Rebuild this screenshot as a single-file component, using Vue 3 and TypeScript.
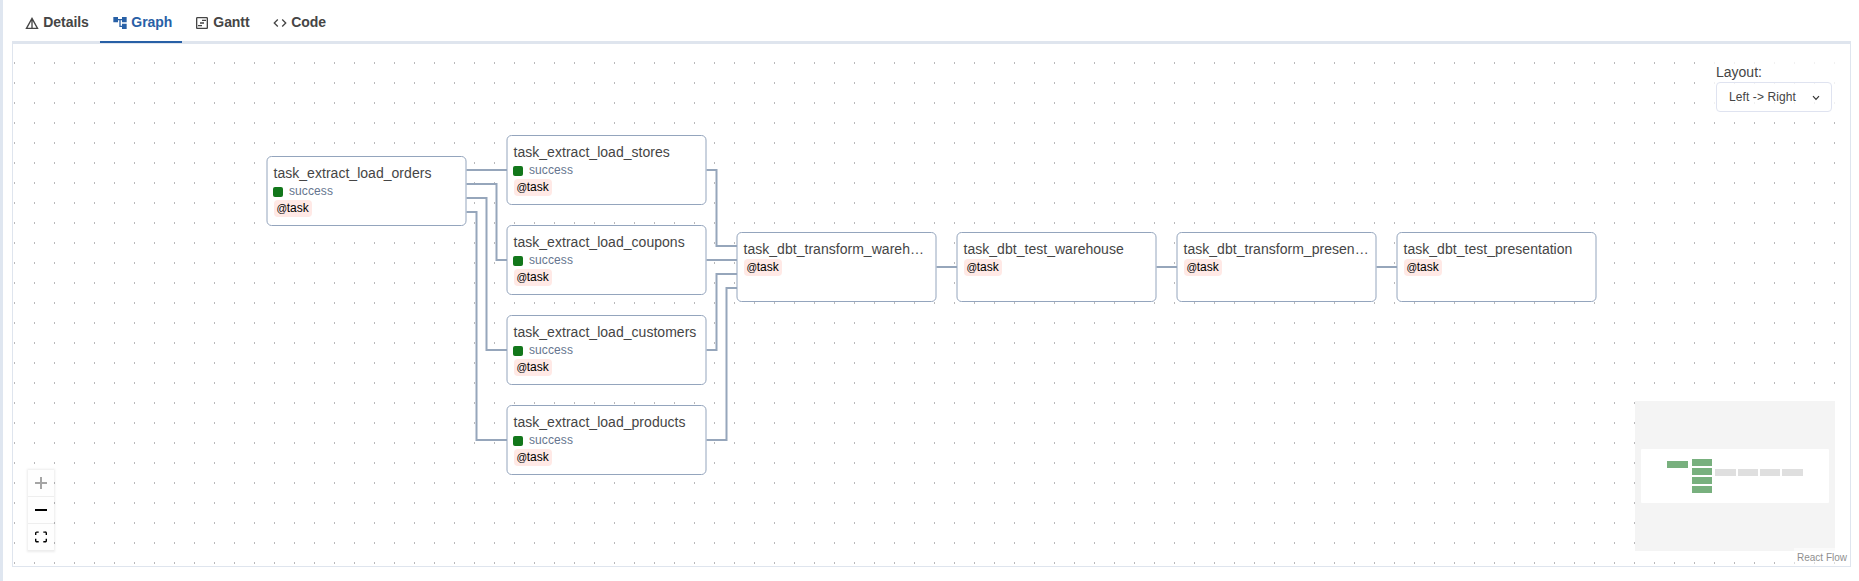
<script setup lang="ts">
interface TaskNode {
  id: string
  label: string
  x: number
  y: number
  success: boolean
}
interface MiniRect {
  x: number
  y: number
  w: number
  done: boolean
}

const tabs = [
  { name: 'Details', icon: 'M12 3L2 21h20L12 3zm1 5.92L18.6 19H13V8.92zm-2 0V19H5.4L11 8.92z' },
  { name: 'Graph', icon: 'M22 11V3h-7v3H9V3H2v8h7V8h2v10h4v3h7v-8h-7v3h-2V8h2v3z' },
  {
    name: 'Gantt',
    icon: 'M19 5v14H5V5h14m0-2H5c-1.1 0-2 .9-2 2v14c0 1.1.9 2 2 2h14c1.1 0 2-.9 2-2V5c0-1.1-.9-2-2-2zM12 7h6v2h-6zM9 11h6v2H9zM6 15h6v2H6z',
  },
  {
    name: 'Code',
    icon: 'M9.4 16.6L4.8 12l4.6-4.6L8 6l-6 6 6 6 1.4-1.4zm5.2 0l4.6-4.6-4.6-4.6L16 6l6 6-6 6-1.4-1.4z',
  },
]
const activeTab = 'Graph'

// Node positions are relative to the inner origin of the canvas.
const nodes: TaskNode[] = [
  { id: 'orders', label: 'task_extract_load_orders', x: 253, y: 112, success: true },
  { id: 'stores', label: 'task_extract_load_stores', x: 493, y: 91, success: true },
  { id: 'coupons', label: 'task_extract_load_coupons', x: 493, y: 181, success: true },
  { id: 'customers', label: 'task_extract_load_customers', x: 493, y: 271, success: true },
  { id: 'products', label: 'task_extract_load_products', x: 493, y: 361, success: true },
  { id: 'tw', label: 'task_dbt_transform_wareh…', x: 723, y: 188, success: false },
  { id: 'ew', label: 'task_dbt_test_warehouse', x: 943, y: 188, success: false },
  { id: 'tp', label: 'task_dbt_transform_presen…', x: 1163, y: 188, success: false },
  { id: 'ep', label: 'task_dbt_test_presentation', x: 1383, y: 188, success: false },
]

const edges = [
  'M453.5 126H494',
  'M453.5 140H483.5V216H494',
  'M453.5 154H473.5V306H494',
  'M453.5 168H463.5V396H494',
  'M693.5 126H703.5V202H724',
  'M693.5 216H724',
  'M693.5 306H703.5V230H724',
  'M693.5 396H713.5V244H724',
  'M923.5 223H944',
  'M1143.5 223H1164',
  'M1363.5 223H1384',
]

const mini: MiniRect[] = [
  { x: 32, y: 60, w: 21, done: true },
  { x: 57, y: 58, w: 20, done: true },
  { x: 57, y: 67, w: 20, done: true },
  { x: 57, y: 76, w: 20, done: true },
  { x: 57, y: 85, w: 20, done: true },
  { x: 80, y: 68, w: 21, done: false },
  { x: 103, y: 68, w: 20, done: false },
  { x: 125, y: 68, w: 20, done: false },
  { x: 147, y: 68, w: 21, done: false },
]
</script>

<template>
  <div class="page">
    <nav class="tabs">
      <button v-for="t in tabs" :key="t.name" class="tab" :class="{ active: t.name === activeTab }">
        <svg class="tab-icon" viewBox="0 0 24 24"><path :d="t.icon" /></svg>
        <span>{{ t.name }}</span>
      </button>
    </nav>

    <main class="canvas">
      <svg class="layer">
        <defs>
          <pattern id="dots" x="1" y="18" width="20" height="20" patternUnits="userSpaceOnUse">
            <rect width="1" height="2" fill="#b9b9bb" />
          </pattern>
        </defs>
        <rect width="100%" height="100%" fill="url(#dots)" />
        <path v-for="d in edges" :key="d" :d="d" class="edge" />
      </svg>

      <article v-for="n in nodes" :key="n.id" class="node" :style="{ left: n.x + 'px', top: n.y + 'px' }">
        <svg class="frame" viewBox="0 0 201 70"><rect x="1" y="0.5" width="199" height="69" rx="4.5" /></svg>
        <div class="title">{{ n.label }}</div>
        <div v-if="n.success" class="state"><i class="square"></i><span>success</span></div>
        <div class="badge"><span class="at">@</span>task</div>
      </article>

      <section class="layout-panel">
        <label class="layout-label">Layout:</label>
        <div class="select">
          <span>Left -&gt; Right</span>
          <svg class="chevron" viewBox="0 0 8 6"><path d="M1 1.2L4 4.3L7 1.2" /></svg>
        </div>
      </section>

      <div class="controls">
        <button class="control"><svg viewBox="0 0 12 12" class="dim"><path d="M5 0h2v5h5v2H7v5H5V7H0V5h5z" /></svg></button>
        <button class="control"><svg viewBox="0 0 12 12"><path d="M0 5h12v2H0z" /></svg></button>
        <button class="control">
          <svg viewBox="0 0 32 30">
            <path d="M3.692 4.63c0-.53.4-.938.939-.938h5.215V0H4.708C2.13 0 0 2.054 0 4.63v5.216h3.692V4.631zM27.354 0h-5.2v3.692h5.17c.53 0 .984.4.984.939v5.215H32V4.631A4.624 4.624 0 0027.354 0zm.954 24.83c0 .532-.4.94-.939.94h-5.215v3.768h5.215c2.577 0 4.631-2.13 4.631-4.707v-5.139h-3.692v5.139zm-23.677.94c-.531 0-.939-.4-.939-.94v-5.138H0v5.139c0 2.577 2.13 4.707 4.708 4.707h5.138V25.77H4.631z" />
          </svg>
        </button>
      </div>

      <svg class="minimap" viewBox="0 0 200 150">
        <rect width="200" height="150" fill="#f4f4f4" />
        <rect x="6" y="48" width="188" height="54" rx="1" fill="#fff" />
        <rect v-for="(m, i) in mini" :key="i" :x="m.x" :y="m.y" :width="m.w" height="7" :fill="m.done ? '#78b07e' : '#dfdfdf'" />
      </svg>

      <div class="attribution">React Flow</div>
    </main>
  </div>
</template>

<style>
body {
  margin: 0;
  background: #fff;
}
</style>

<style scoped>
.page {
  box-sizing: border-box;
  width: 1859px;
  height: 581px;
  padding: 0 8px 14px 9px;
  border-left: 3px solid #dfe6f0;
  display: flex;
  flex-direction: column;
  overflow: hidden;
  font-family: "Liberation Sans", Arial, sans-serif;
  color: #454545;
}
button {
  margin: 0;
  padding: 0;
  border: 0;
  background: none;
  font: inherit;
  color: inherit;
}
.tabs {
  box-sizing: border-box;
  height: 43px;
  flex: none;
  display: grid;
  grid-template-columns: 88px 82px 78px 80px;
  border-bottom: 2px solid #dfe5ee;
}
.tab {
  box-sizing: border-box;
  height: 43px;
  padding: 3px 0 0 12px;
  display: flex;
  align-items: center;
  border-bottom: 2px solid transparent;
  font-size: 14px;
  font-weight: 700;
  letter-spacing: -0.05px;
}
.tab.active {
  color: #2860a6;
  border-bottom-color: #2860a6;
}
.tab-icon {
  width: 16px;
  height: 16px;
  margin: 2px 3px 0 0.3px;
  fill: currentColor;
}
.canvas {
  box-sizing: border-box;
  position: relative;
  flex: none;
  height: 524px;
  border: 1px solid #dfe5ee;
  overflow: hidden;
}
.layer {
  display: block;
  width: 100%;
  height: 100%;
}
.edge {
  fill: none;
  stroke: #96a6bb;
  stroke-width: 2;
}
.node {
  position: absolute;
  z-index: 0;
  box-sizing: border-box;
  width: 201px;
  height: 70px;
  padding: 9px 0 0 7.5px;
}
.frame {
  position: absolute;
  inset: 0;
  width: 201px;
  height: 70px;
  z-index: -1;
}
.frame rect {
  fill: #fff;
  stroke: #94a5bd;
  stroke-width: 1;
}
.title {
  height: 18px;
  line-height: 16px;
  font-size: 14px;
  letter-spacing: 0.03px;
  white-space: nowrap;
}
.state {
  height: 17px;
  display: flex;
  align-items: center;
  gap: 6px;
  margin-left: -0.5px;
  font-size: 12px;
  line-height: 17px;
  letter-spacing: 0.1px;
  color: #65758e;
}
.square {
  width: 10px;
  height: 10px;
  margin-top: 1px;
  border-radius: 2px;
  background: #12771b;
}
.badge {
  box-sizing: border-box;
  width: 38px;
  height: 17px;
  padding-left: 3px;
  border-radius: 4px;
  background: #ffe9e6;
  font-size: 12px;
  line-height: 16px;
  color: #000;
  white-space: nowrap;
}
.at {
  font-size: 10.5px;
  letter-spacing: -0.5px;
}
.layout-panel {
  position: absolute;
  left: 1699px;
  top: 15px;
  width: 125px;
  height: 55px;
  padding: 3px 0 0 4px;
  box-sizing: border-box;
  background: rgba(255, 255, 255, 0.8);
}
.layout-label {
  display: block;
  height: 20px;
  line-height: 20px;
  font-size: 14px;
}
.select {
  box-sizing: border-box;
  width: 116px;
  height: 30px;
  padding: 0 11px 0 12px;
  display: flex;
  align-items: center;
  justify-content: space-between;
  border: 1px solid #dfe3f0;
  border-radius: 4px;
  font-size: 12px;
  letter-spacing: 0.1px;
}
.chevron {
  width: 8px;
  height: 6px;
  margin-top: 1px;
  fill: none;
  stroke: #333;
  stroke-width: 1.2;
}
.controls {
  position: absolute;
  left: 15px;
  top: 426px;
  width: 26px;
  box-shadow: 0 0 2px 1px rgba(0, 0, 0, 0.08);
}
.control {
  box-sizing: border-box;
  display: flex;
  align-items: center;
  justify-content: center;
  width: 26px;
  height: 27px;
  border-bottom: 1px solid #eee;
  background: #fefefe;
}
.control svg {
  width: 12px;
  height: 12px;
}
.control .dim {
  fill-opacity: 0.35;
}
.minimap {
  position: absolute;
  left: 1622px;
  top: 357px;
  width: 200px;
  height: 150px;
}
.attribution {
  box-sizing: border-box;
  position: absolute;
  right: 0;
  bottom: 0;
  height: 18px;
  width: 56px;
  padding: 1px 0 0 3px;
  background: rgba(255, 255, 255, 0.5);
  font-size: 10px;
  line-height: 18px;
  color: #8f8f8f;
  white-space: nowrap;
}
</style>
